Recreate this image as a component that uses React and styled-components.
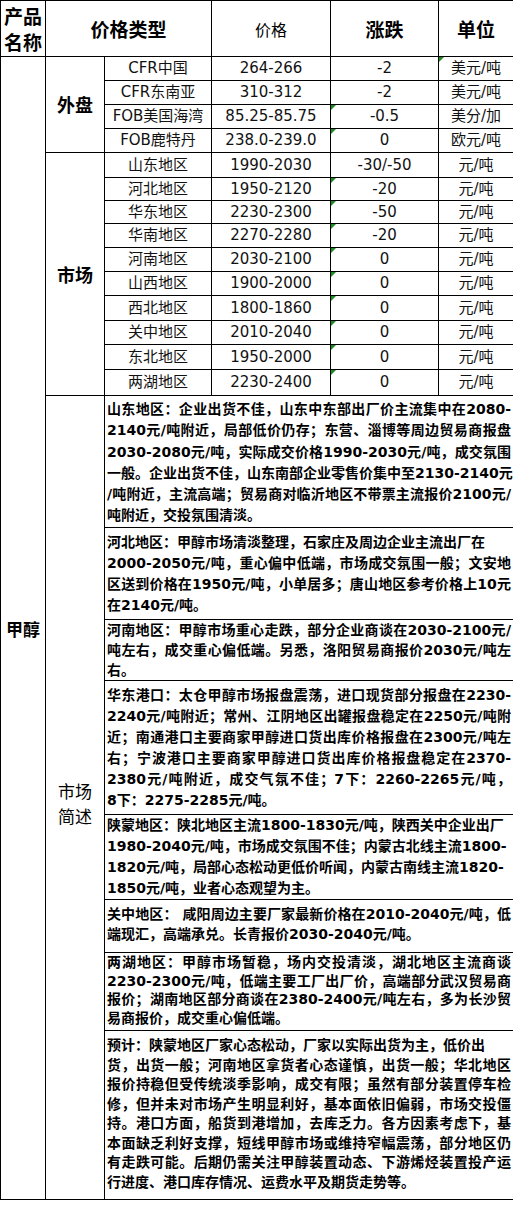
import React from 'react'
import styled, { createGlobalStyle } from 'styled-components'

const GlobalStyle = createGlobalStyle`
  body {
    margin: 0;
    background: #fff;
  }
`

const Sheet = styled.table`
  border-collapse: collapse;
  table-layout: fixed;
  width: 513px;
  color: #000;
  font-family: "DejaVu Sans", "Noto Sans CJK SC", sans-serif;
`

const Row = styled.tr`
  height: ${p => p.$h}px;
`

const Cell = styled.td`
  border: 1px solid #000;
  padding: 0;
  text-align: center;
  vertical-align: middle;
  white-space: nowrap;
`

const HeadCell = styled(Cell)`
  font-family: "Noto Sans CJK SC", sans-serif;
  font-size: ${p => p.$size || 19}px;
  font-weight: ${p => (p.$bold ? 700 : 400)};
  line-height: 26px;
  white-space: normal;
`

const GroupCell = styled(Cell)`
  font-family: "Noto Sans CJK SC", sans-serif;
  font-size: ${p => p.$size || 18}px;
  font-weight: ${p => (p.$bold ? 700 : 400)};
  line-height: 25px;
  white-space: normal;
  padding-top: ${p => p.$pt || 0}px;
`

const DataCell = styled(Cell)`
  position: relative;
  font-size: 15px;
  line-height: 1;
  color: #111;

  &::before {
    content: '';
    display: ${p => (p.$flag ? 'block' : 'none')};
    position: absolute;
    top: 0;
    left: 0;
    border-top: 5px solid #1f8a1f;
    border-right: 5px solid transparent;
  }
`

const NoteCell = styled(Cell)`
  vertical-align: top;
  text-align: left;
  padding: ${p => p.$pt}px 2px 0 2px;
  font-size: 14px;
  font-weight: 700;
  line-height: ${p => p.$lh}px;
`

const Line = styled.span`
  display: block;
  white-space: nowrap;
  text-align: ${p => (p.$full ? 'justify' : 'left')};
  text-align-last: ${p => (p.$full ? 'justify' : 'left')};
`

const outer = [
  { name: 'CFR中国', price: '264-266', change: '-2', unit: '美元/吨', unitFlag: true },
  { name: 'CFR东南亚', price: '310-312', change: '-2', unit: '美元/吨' },
  { name: 'FOB美国海湾', price: '85.25-85.75', change: '-0.5', unit: '美分/加', flag: true },
  { name: 'FOB鹿特丹', price: '238.0-239.0', change: '0', unit: '欧元/吨', flag: true },
]

const market = [
  { name: '山东地区', price: '1990-2030', change: '-30/-50', h: 25 },
  { name: '河北地区', price: '1950-2120', change: '-20', h: 23, flag: true },
  { name: '华东地区', price: '2230-2300', change: '-50', h: 23, flag: true },
  { name: '华南地区', price: '2270-2280', change: '-20', h: 24, flag: true },
  { name: '河南地区', price: '2030-2100', change: '0', h: 24, flag: true },
  { name: '山西地区', price: '1900-2000', change: '0', h: 24, flag: true },
  { name: '西北地区', price: '1800-1860', change: '0', h: 25, flag: true },
  { name: '关中地区', price: '2010-2040', change: '0', h: 24, flag: true },
  { name: '东北地区', price: '1950-2000', change: '0', h: 25, flag: true },
  { name: '两湖地区', price: '2230-2400', change: '0', h: 26, flag: true },
]

const notes = [
  {
    h: 132, lh: 21.3, pt: 3, full: [0, 1, 2, 3, 4],
    lines: [
      '山东地区：企业出货不佳，山东中东部出厂价主流集中在2080-',
      '2140元/吨附近，局部低价仍存；东营、淄博等周边贸易商报盘',
      '2030-2080元/吨，实际成交价格1990-2030元/吨，成交氛围',
      '一般。企业出货不佳，山东南部企业零售价集中至2130-2140元',
      '/吨附近，主流高端；贸易商对临沂地区不带票主流报价2100元/',
      '吨附近，交投氛围清淡。',
    ],
  },
  {
    h: 92, lh: 21, pt: 3.5, full: [1, 2],
    lines: [
      '河北地区：甲醇市场清淡整理，石家庄及周边企业主流出厂在',
      '2000-2050元/吨，重心偏中低端，市场成交氛围一般；文安地',
      '区送到价格在1950元/吨，小单居多；唐山地区参考价格上10元',
      '在2140元/吨。',
    ],
  },
  {
    h: 59, lh: 20, pt: 0, full: [0, 1],
    lines: [
      '河南地区：甲醇市场重心走跌，部分企业商谈在2030-2100元/',
      '吨左右，成交重心偏低端。另悉，洛阳贸易商报价2030元/吨左',
      '右。',
    ],
  },
  {
    h: 134, lh: 21, pt: 3.5, full: [0, 1, 2, 3, 4],
    lines: [
      '华东港口：太仓甲醇市场报盘震荡，进口现货部分报盘在2230-',
      '2240元/吨附近；常州、江阴地区出罐报盘稳定在2250元/吨附',
      '近；南通港口主要商家甲醇进口货出库价格报盘在2300元/吨左',
      '右；宁波港口主要商家甲醇进口货出库价格报盘稳定在2370-',
      '2380元/吨附近，成交气氛不佳；7下：2260-2265元/吨，',
      '8下：2275-2285元/吨。',
    ],
  },
  {
    h: 85, lh: 21, pt: 0, full: [],
    lines: [
      '陕蒙地区：陕北地区主流1800-1830元/吨，陕西关中企业出厂',
      '1980-2040元/吨，市场成交氛围不佳；内蒙古北线主流1800-',
      '1820元/吨，局部心态松动更低价听闻，内蒙古南线主流1820-',
      '1850元/吨，业者心态观望为主。',
    ],
  },
  {
    h: 53, lh: 20, pt: 4, full: [0],
    lines: [
      '关中地区： 咸阳周边主要厂家最新价格在2010-2040元/吨，低',
      '端现汇，高端承兑。长青报价2030-2040元/吨。',
    ],
  },
  {
    h: 78, lh: 18.5, pt: 0, full: [0, 1, 2],
    lines: [
      '两湖地区：甲醇市场暂稳，场内交投清淡，湖北地区主流商谈',
      '2230-2300元/吨，低端主要工厂出厂价，高端部分武汉贸易商',
      '报价；湖南地区部分商谈在2380-2400元/吨左右，多为长沙贸',
      '易商报价，成交重心偏低端。',
    ],
  },
  {
    h: 169, lh: 19.5, pt: 5, full: [1, 2, 3, 4, 5, 6],
    lines: [
      '预计：陕蒙地区厂家心态松动，厂家以实际出货为主，低价出',
      '货，出货一般；河南地区拿货者心态谨慎，出货一般；华北地区',
      '报价持稳但受传统淡季影响，成交有限；虽然有部分装置停车检',
      '修，但并未对市场产生明显利好，基本面依旧偏弱，市场交投僵',
      '持。港口方面，船货到港增加，去库乏力。各方因素考虑下，基',
      '本面缺乏利好支撑，短线甲醇市场或维持窄幅震荡，部分地区仍',
      '有走跌可能。后期仍需关注甲醇装置动态、下游烯烃装置投产运',
      '行进度、港口库存情况、运费水平及期货走势等。',
    ],
  },
]

const bodyRows = outer.length + market.length + notes.length

const App = () => {
  return (
    <>
      <GlobalStyle />
      <Sheet>
        <colgroup>
          <col style={{ width: 45 }} />
          <col style={{ width: 59 }} />
          <col style={{ width: 107 }} />
          <col style={{ width: 119 }} />
          <col style={{ width: 108 }} />
          <col style={{ width: 75 }} />
        </colgroup>
        <tbody>
          <Row $h={56}>
            <HeadCell $bold>产品<br />名称</HeadCell>
            <HeadCell $bold colSpan={2}>价格类型</HeadCell>
            <HeadCell $size={16}>价格</HeadCell>
            <HeadCell $bold>涨跌</HeadCell>
            <HeadCell $bold>单位</HeadCell>
          </Row>

          {outer.map((r, i) => (
            <Row $h={24} key={r.name}>
              {i === 0 && (
                <GroupCell $bold $size={17} rowSpan={bodyRows}>甲醇</GroupCell>
              )}
              {i === 0 && (
                <GroupCell $bold rowSpan={outer.length}>外盘</GroupCell>
              )}
              <DataCell>{r.name}</DataCell>
              <DataCell>{r.price}</DataCell>
              <DataCell $flag={r.flag}>{r.change}</DataCell>
              <DataCell $flag={r.unitFlag}>{r.unit}</DataCell>
            </Row>
          ))}

          {market.map((r, i) => (
            <Row $h={r.h} key={r.name}>
              {i === 0 && (
                <GroupCell $bold rowSpan={market.length}>市场</GroupCell>
              )}
              <DataCell>{r.name}</DataCell>
              <DataCell>{r.price}</DataCell>
              <DataCell $flag={r.flag}>{r.change}</DataCell>
              <DataCell>元/吨</DataCell>
            </Row>
          ))}

          {notes.map((n, i) => (
            <Row $h={n.h} key={i}>
              {i === 0 && (
                <GroupCell $size={17} $pt={10} rowSpan={notes.length}>市场<br />简述</GroupCell>
              )}
              <NoteCell colSpan={4} $lh={n.lh} $pt={n.pt}>
                {n.lines.map((l, j) => (
                  <Line key={j} $full={n.full.includes(j)}>{l}</Line>
                ))}
              </NoteCell>
            </Row>
          ))}
        </tbody>
      </Sheet>
    </>
  )
}

export default App
